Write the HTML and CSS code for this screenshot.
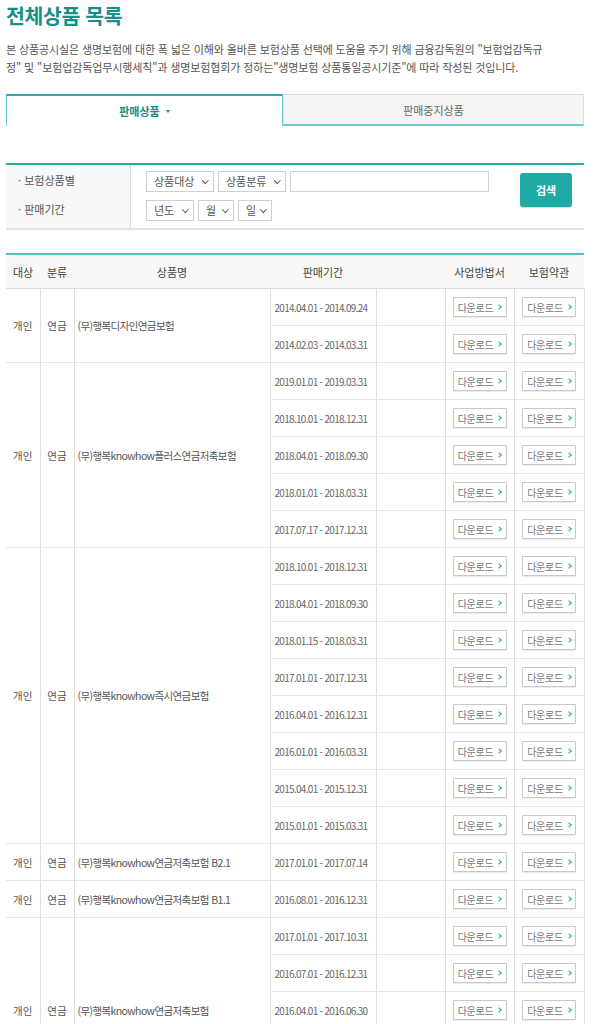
FILE: index.html
```html
<!DOCTYPE html>
<html lang="ko">
<head>
<meta charset="utf-8">
<link rel="stylesheet" href="styles.css">
</head>
<body>
<div class="page">
  <h1 class="title">전체상품 목록</h1>
  <p class="desc">본 상품공시실은 생명보험에 대한 폭 넓은 이해와 올바른 보험상품 선택에 도움을 주기 위해 금융감독원의 "보험업감독규<br>정" 및 "보험업감독업무시행세칙"과 생명보험협회가 정하는"생명보험 상품통일공시기준"에 따라 작성된 것입니다.</p>

  <div class="tabs">
    <div class="tab active">판매상품 <span class="caret"></span></div>
    <div class="tab">판매중지상품</div>
  </div>

  <div class="search">
    <div class="labels">
      <div class="label">· 보험상품별</div>
      <div class="label">· 판매기간</div>
    </div>
    <div class="fields">
      <div class="frow">
        <span class="sel w68">상품대상<i class="chev"></i></span>
        <span class="sel w68">상품분류<i class="chev"></i></span>
        <span class="input"></span>
      </div>
      <div class="frow">
        <span class="sel w48">년도<i class="chev"></i></span>
        <span class="sel w36">월<i class="chev"></i></span>
        <span class="sel w34">일<i class="chev"></i></span>
      </div>
    </div>
    <div class="btnwrap"><button class="btn">검색</button></div>
  </div>

  <table class="list">
    <colgroup>
      <col style="width:34px"><col style="width:34px"><col style="width:196px"><col style="width:106px"><col style="width:69px"><col style="width:69px"><col style="width:70px">
    </colgroup>
    <thead>
      <tr><th>대상</th><th>분류</th><th>상품명</th><th>판매기간</th><th></th><th>사업방법서</th><th>보험약관</th></tr>
    </thead>
    <tbody>
      <tr><td class="c" rowspan="2">개인</td><td class="c" rowspan="2">연금</td><td class="name" rowspan="2">(무)행복디자인연금보험</td><td class="date">2014.04.01 - 2014.09.24</td><td></td><td class="c"><span class="dl">다운로드<i class="arr"></i></span></td><td class="c"><span class="dl">다운로드<i class="arr"></i></span></td></tr>
      <tr><td class="date">2014.02.03 - 2014.03.31</td><td></td><td class="c"><span class="dl">다운로드<i class="arr"></i></span></td><td class="c"><span class="dl">다운로드<i class="arr"></i></span></td></tr>

      <tr><td class="c" rowspan="5">개인</td><td class="c" rowspan="5">연금</td><td class="name" rowspan="5">(무)행복knowhow플러스연금저축보험</td><td class="date">2019.01.01 - 2019.03.31</td><td></td><td class="c"><span class="dl">다운로드<i class="arr"></i></span></td><td class="c"><span class="dl">다운로드<i class="arr"></i></span></td></tr>
      <tr><td class="date">2018.10.01 - 2018.12.31</td><td></td><td class="c"><span class="dl">다운로드<i class="arr"></i></span></td><td class="c"><span class="dl">다운로드<i class="arr"></i></span></td></tr>
      <tr><td class="date">2018.04.01 - 2018.09.30</td><td></td><td class="c"><span class="dl">다운로드<i class="arr"></i></span></td><td class="c"><span class="dl">다운로드<i class="arr"></i></span></td></tr>
      <tr><td class="date">2018.01.01 - 2018.03.31</td><td></td><td class="c"><span class="dl">다운로드<i class="arr"></i></span></td><td class="c"><span class="dl">다운로드<i class="arr"></i></span></td></tr>
      <tr><td class="date">2017.07.17 - 2017.12.31</td><td></td><td class="c"><span class="dl">다운로드<i class="arr"></i></span></td><td class="c"><span class="dl">다운로드<i class="arr"></i></span></td></tr>

      <tr><td class="c" rowspan="8">개인</td><td class="c" rowspan="8">연금</td><td class="name" rowspan="8">(무)행복knowhow즉시연금보험</td><td class="date">2018.10.01 - 2018.12.31</td><td></td><td class="c"><span class="dl">다운로드<i class="arr"></i></span></td><td class="c"><span class="dl">다운로드<i class="arr"></i></span></td></tr>
      <tr><td class="date">2018.04.01 - 2018.09.30</td><td></td><td class="c"><span class="dl">다운로드<i class="arr"></i></span></td><td class="c"><span class="dl">다운로드<i class="arr"></i></span></td></tr>
      <tr><td class="date">2018.01.15 - 2018.03.31</td><td></td><td class="c"><span class="dl">다운로드<i class="arr"></i></span></td><td class="c"><span class="dl">다운로드<i class="arr"></i></span></td></tr>
      <tr><td class="date">2017.01.01 - 2017.12.31</td><td></td><td class="c"><span class="dl">다운로드<i class="arr"></i></span></td><td class="c"><span class="dl">다운로드<i class="arr"></i></span></td></tr>
      <tr><td class="date">2016.04.01 - 2016.12.31</td><td></td><td class="c"><span class="dl">다운로드<i class="arr"></i></span></td><td class="c"><span class="dl">다운로드<i class="arr"></i></span></td></tr>
      <tr><td class="date">2016.01.01 - 2016.03.31</td><td></td><td class="c"><span class="dl">다운로드<i class="arr"></i></span></td><td class="c"><span class="dl">다운로드<i class="arr"></i></span></td></tr>
      <tr><td class="date">2015.04.01 - 2015.12.31</td><td></td><td class="c"><span class="dl">다운로드<i class="arr"></i></span></td><td class="c"><span class="dl">다운로드<i class="arr"></i></span></td></tr>
      <tr><td class="date">2015.01.01 - 2015.03.31</td><td></td><td class="c"><span class="dl">다운로드<i class="arr"></i></span></td><td class="c"><span class="dl">다운로드<i class="arr"></i></span></td></tr>

      <tr><td class="c">개인</td><td class="c">연금</td><td class="name">(무)행복knowhow연금저축보험 B2.1</td><td class="date">2017.01.01 - 2017.07.14</td><td></td><td class="c"><span class="dl">다운로드<i class="arr"></i></span></td><td class="c"><span class="dl">다운로드<i class="arr"></i></span></td></tr>
      <tr><td class="c">개인</td><td class="c">연금</td><td class="name">(무)행복knowhow연금저축보험 B1.1</td><td class="date">2016.08.01 - 2016.12.31</td><td></td><td class="c"><span class="dl">다운로드<i class="arr"></i></span></td><td class="c"><span class="dl">다운로드<i class="arr"></i></span></td></tr>

      <tr><td class="c" rowspan="5">개인</td><td class="c" rowspan="5">연금</td><td class="name" rowspan="5">(무)행복knowhow연금저축보험</td><td class="date">2017.01.01 - 2017.10.31</td><td></td><td class="c"><span class="dl">다운로드<i class="arr"></i></span></td><td class="c"><span class="dl">다운로드<i class="arr"></i></span></td></tr>
      <tr><td class="date">2016.07.01 - 2016.12.31</td><td></td><td class="c"><span class="dl">다운로드<i class="arr"></i></span></td><td class="c"><span class="dl">다운로드<i class="arr"></i></span></td></tr>
      <tr><td class="date">2016.04.01 - 2016.06.30</td><td></td><td class="c"><span class="dl">다운로드<i class="arr"></i></span></td><td class="c"><span class="dl">다운로드<i class="arr"></i></span></td></tr>
      <tr><td class="date">2016.01.01 - 2016.03.31</td><td></td><td class="c"><span class="dl">다운로드<i class="arr"></i></span></td><td class="c"><span class="dl">다운로드<i class="arr"></i></span></td></tr>
      <tr><td class="date">2015.04.01 - 2015.12.31</td><td></td><td class="c"><span class="dl">다운로드<i class="arr"></i></span></td><td class="c"><span class="dl">다운로드<i class="arr"></i></span></td></tr>
    </tbody>
  </table>
</div>
</body>
</html>
```

FILE: styles.css
```css
html, body {
  margin: 0;
  padding: 0;
  background: #fff;
}
body {
  font-family: "Noto Sans CJK KR", "Noto Sans", sans-serif;
  color: #555;
}
.page {
  padding: 0 10px 0 6px;
}
.title {
  margin: 0;
  padding-top: 1px;
  font-size: 20.5px;
  line-height: 28px;
  font-weight: 700;
  color: #168f8b;
  letter-spacing: -0.4px;
}
.desc {
  margin: 11px 0 0;
  font-size: 11px;
  line-height: 18px;
  color: #555;
  letter-spacing: -0.12px;
  white-space: nowrap;
}
.tabs {
  display: flex;
  margin-top: 18px;
  height: 32px;
}
.tab {
  flex: 0 0 301px;
  box-sizing: border-box;
  display: flex;
  align-items: center;
  justify-content: center;
  font-size: 11px;
  color: #666;
  background: #f5f5f5;
  border: 1px solid #dcdcdc;
  border-bottom: 2px solid #6fcbc7;
}
.tab.active {
  flex: 0 0 277px;
  background: #fff;
  color: #198d89;
  font-weight: 700;
  border: 1px solid #6fcbc7;
  border-top: 2px solid #2aaba6;
  border-bottom: none;
}
.caret {
  display: inline-block;
  width: 0;
  height: 0;
  border-left: 2.5px solid transparent;
  border-right: 2.5px solid transparent;
  border-top: 3px solid #198d89;
  margin-left: 6px;
  margin-top: 1px;
}
.search {
  display: flex;
  margin-top: 37px;
  border-top: 2px solid #2aaba6;
  border-bottom: 2px solid #e2e2e2;
  height: 63px;
}
.labels {
  flex: 0 0 125px;
  background: #f8f8f8;
  border-right: 1px solid #dcdcdc;
  padding: 1px 0 0 12px;
  box-sizing: border-box;
}
.label {
  font-size: 11px;
  line-height: 29px;
  height: 29px;
  color: #555;
}
.fields {
  flex: 0 0 360px;
  padding: 6px 0 0 15px;
  box-sizing: border-box;
  display: flex;
  flex-direction: column;
  gap: 8px;
}
.frow {
  display: flex;
  gap: 4px;
}
.sel {
  box-sizing: border-box;
  height: 21px;
  border: 1px solid #cfcfcf;
  padding: 0 6px 0 7px;
  font-size: 11px;
  line-height: 19px;
  color: #555;
  display: inline-flex;
  align-items: center;
  justify-content: space-between;
  background: #fff;
}
.w68 { width: 68px; }
.w48 { width: 48px; }
.w36 { width: 36px; }
.w34 { width: 34px; }
.chev {
  display: inline-block;
  width: 3.5px;
  height: 3.5px;
  border-right: 1.6px solid #555;
  border-bottom: 1.6px solid #555;
  transform: rotate(45deg);
  margin-top: -3px;
}
.input {
  box-sizing: border-box;
  width: 199px;
  height: 21px;
  border: 1px solid #d3d3d3;
  background: #fff;
}
.btnwrap {
  flex: 1;
  display: flex;
  align-items: flex-start;
  padding: 8px 0 0 29px;
}
.btn {
  width: 52px;
  height: 34px;
  border: none;
  border-radius: 3px;
  background: #20aaa6;
  color: #fff;
  font-family: "Noto Sans CJK KR", sans-serif;
  font-size: 11px;
  font-weight: 700;
  padding: 0;
  box-shadow: 0 1px 1px rgba(0,0,0,0.15);
}
.list {
  margin-top: 23px;
  width: 578px;
  border-collapse: collapse;
  table-layout: fixed;
  border-top: 2px solid #59bdb8;
}
.list th {
  height: 33px;
  padding: 0;
  background: #f8f8f8;
  font-size: 11px;
  font-weight: 400;
  color: #444;
  border-bottom: 1px solid #dedede;
}
.list td {
  height: 36px;
  padding: 0;
  border-top: 1px solid #e6e6e6;
  border-bottom: 1px solid #e6e6e6;
  border-left: 1px solid #dedede;
  font-size: 10.5px;
  color: #555;
  white-space: nowrap;
}
.list td:last-child {
  border-right: 1px solid #dedede;
}
.list tr td.c:first-child {
  border-left: none;
}
.list td.c {
  text-align: center;
}
.list td.name {
  padding-left: 3px;
  letter-spacing: -0.6px;
}
.list td.date {
  padding-left: 4px;
  font-size: 10px;
  letter-spacing: -0.7px;
  color: #666;
}
.dl {
  display: inline-flex;
  align-items: center;
  justify-content: center;
  box-sizing: border-box;
  width: 54px;
  height: 20px;
  border: 1px solid #c9c9c9;
  border-radius: 1px;
  box-shadow: 0 1px 1px rgba(0,0,0,0.08);
  font-size: 10px;
  color: #777;
  letter-spacing: -0.3px;
  background: #fff;
}
.arr {
  display: inline-block;
  width: 3px;
  height: 3px;
  border-right: 1.6px solid #20aaa6;
  border-bottom: 1.6px solid #20aaa6;
  transform: rotate(-45deg);
  margin-left: 4px;
}
```
